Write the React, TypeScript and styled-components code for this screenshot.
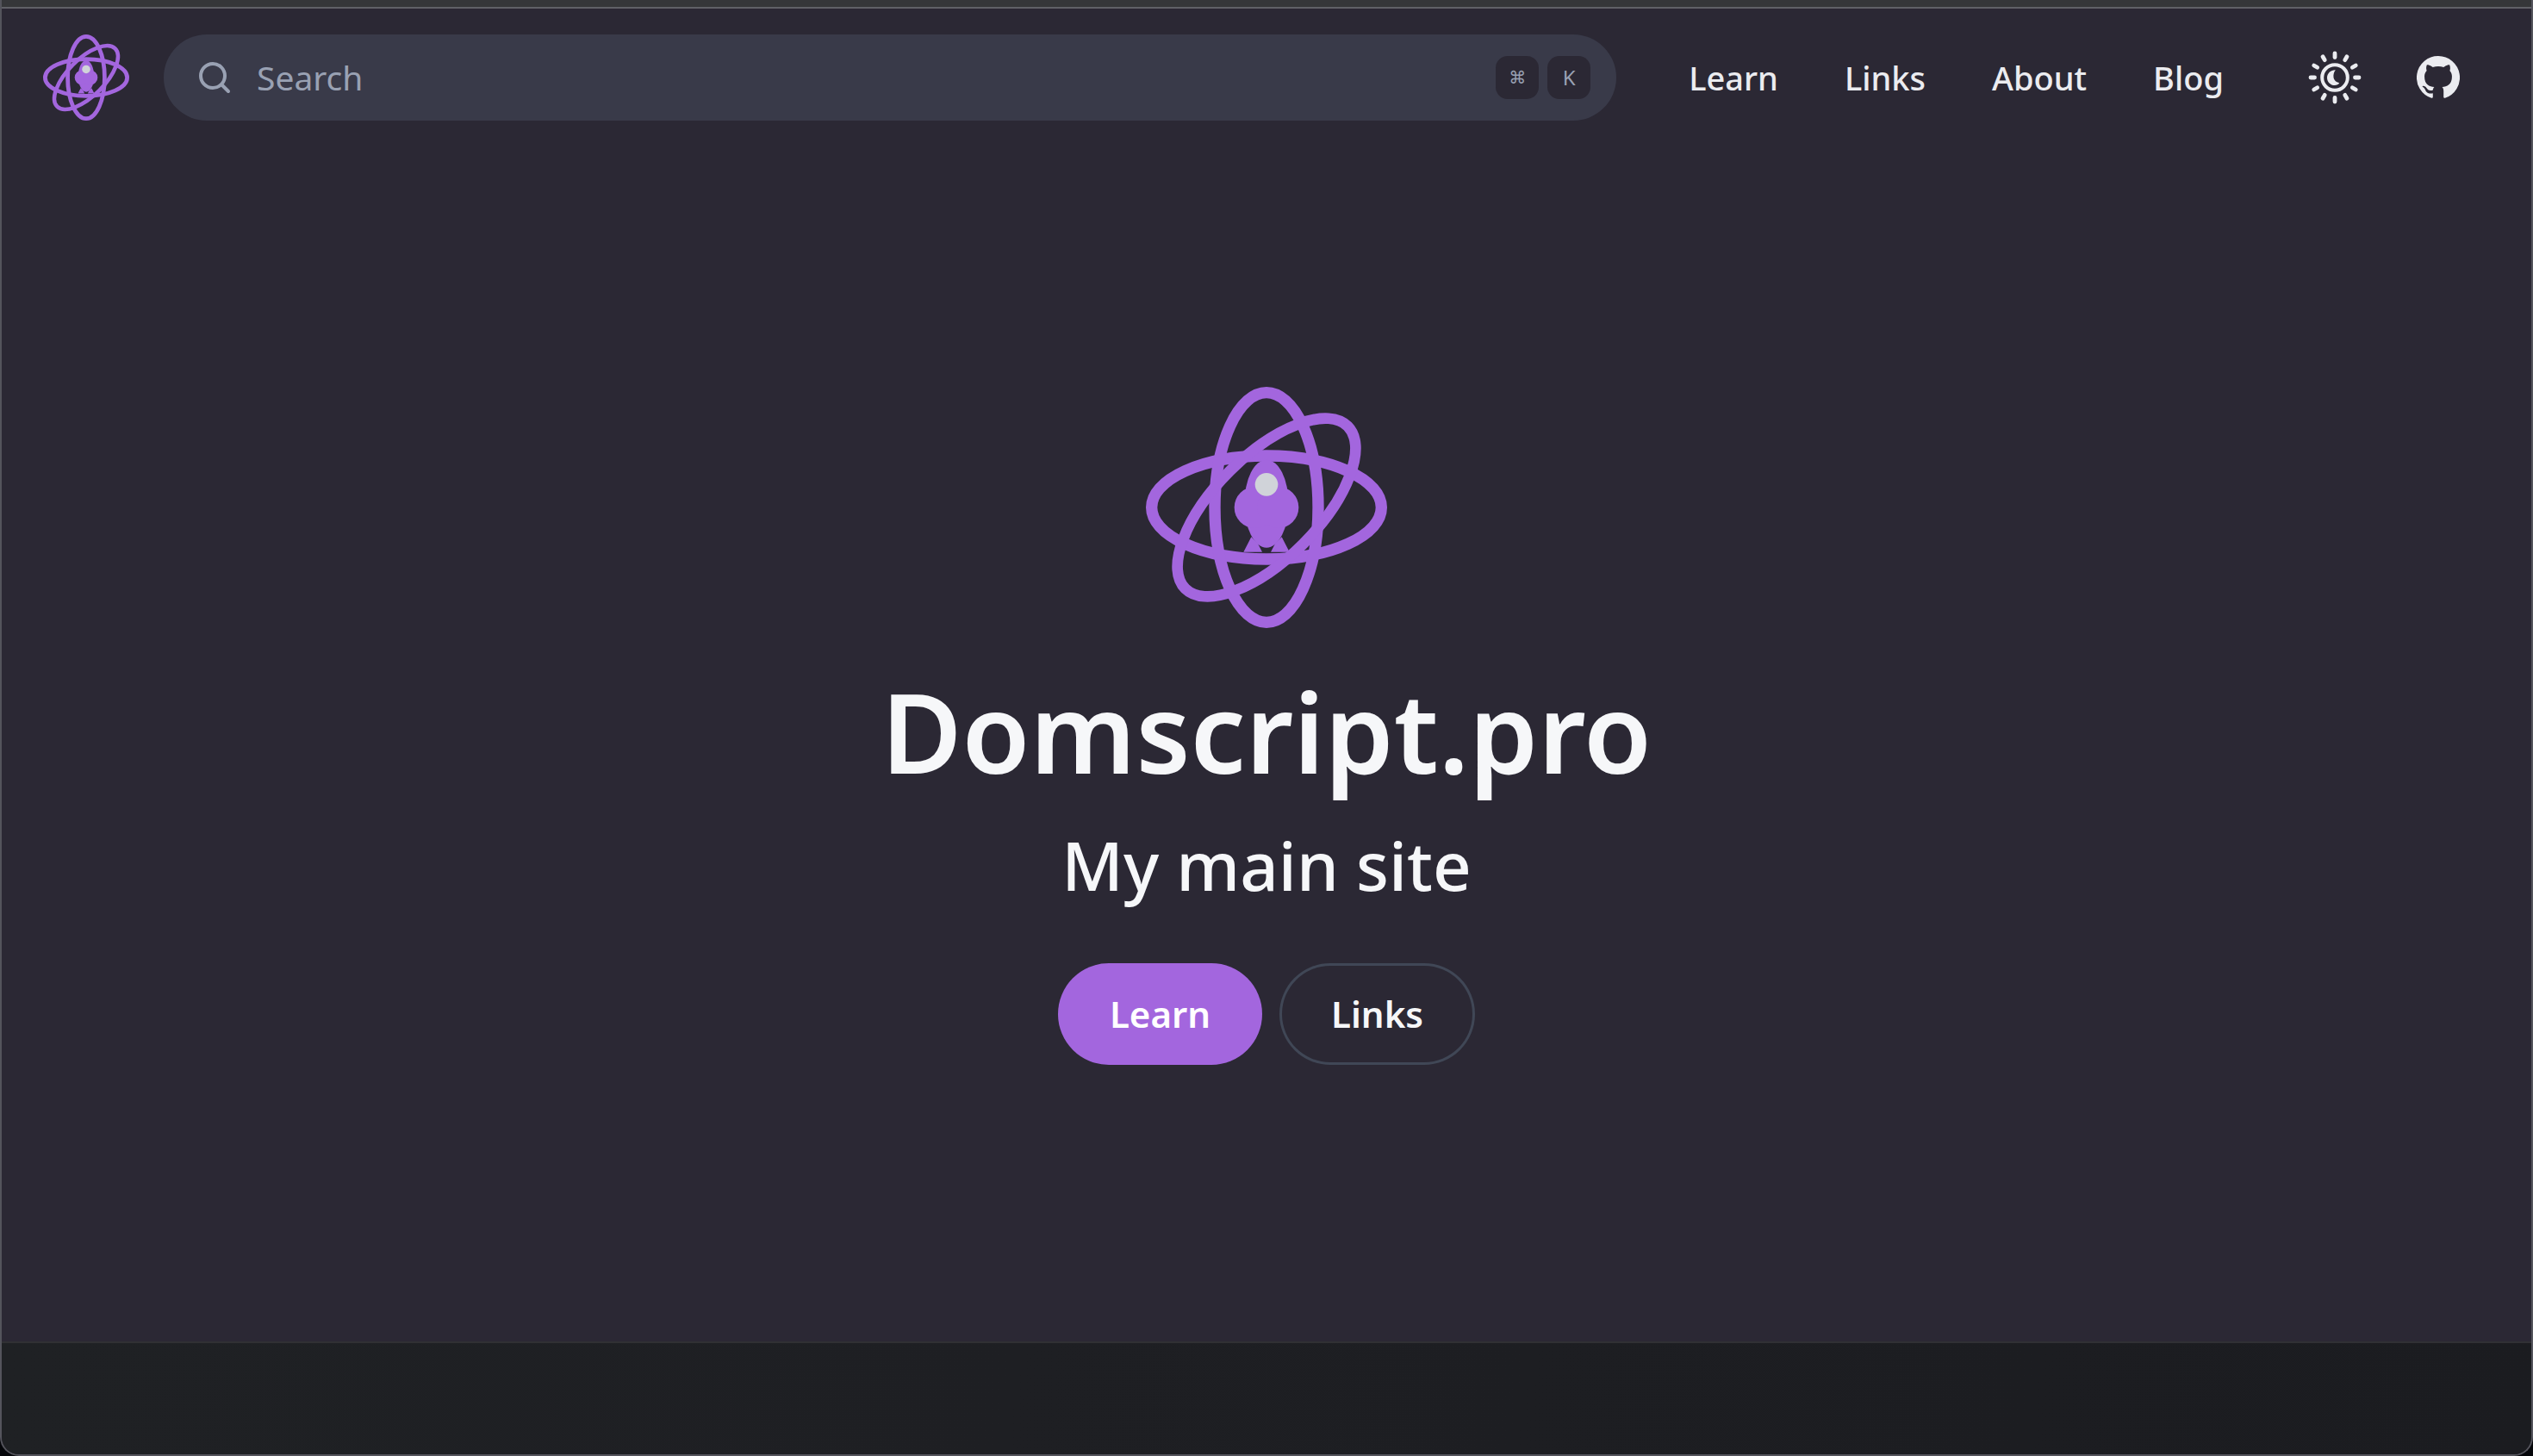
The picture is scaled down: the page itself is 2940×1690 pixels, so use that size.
import React from "react";
import styled, { createGlobalStyle } from "styled-components";

const color = {
  page: "#2b2834",
  accent: "#a366de",
  field: "#393a49",
  muted: "#99a1b3",
  text: "#ebecf0",
  heading: "#f6f7f9",
  outline: "#404756",
};

const GlobalStyle = createGlobalStyle`
  *, *::before, *::after { box-sizing: border-box; }
  body {
    margin: 0;
    background: #05060a;
    color: ${color.text};
    font-family: "Noto Sans", "DejaVu Sans", sans-serif;
  }
`;

const Window = styled.div`
  display: flex;
  flex-direction: column;
  min-height: 100vh;
  overflow: hidden;
  border-radius: 0 0 22px 22px;
  border: 2px solid #54545c;
  border-top: 0;
  background: ${color.page};
`;

const TopStrip = styled.div`
  flex: none;
  height: 10px;
  margin: 0 -2px;
  background: #353639;
  border-bottom: 2px solid #606067;
`;

const Header = styled.header`
  display: flex;
  align-items: center;
  padding: 30px 83px 30px 48px;
`;

const HomeLink = styled.a`
  display: flex;
  margin-right: 40px;
`;

const SearchBox = styled.label`
  flex: 1;
  min-width: 0;
  height: 100px;
  display: flex;
  align-items: center;
  gap: 10px;
  padding: 0 30px 0 40px;
  border-radius: 50px;
  background: ${color.field};
  color: ${color.muted};
`;

const SearchInput = styled.input`
  flex: 1;
  min-width: 0;
  margin-left: 20px;
  padding: 0;
  border: 0;
  outline: 0;
  background: transparent;
  color: ${color.text};
  font: 400 39px/50px "Noto Sans", sans-serif;
  &::placeholder { color: ${color.muted}; opacity: 1; }
`;

const Key = styled.kbd<{ $symbol?: boolean }>`
  display: flex;
  align-items: center;
  justify-content: center;
  width: 50px;
  height: 50px;
  border-radius: 14px;
  background: ${color.page};
  font: 400 ${(p) => (p.$symbol ? 20 : 24)}px/30px "Noto Sans", "DejaVu Sans", sans-serif;
`;

const Nav = styled.nav`
  display: flex;
  gap: 77px;
  margin: 0 98px 0 84px;
`;

const NavLink = styled.a`
  color: ${color.text};
  text-decoration: none;
  font-size: 38px;
  line-height: 50px;
  font-weight: 500;
`;

const Actions = styled.div`
  display: flex;
  align-items: center;
  gap: 64px;
`;

const IconButton = styled.button`
  display: flex;
  padding: 0;
  border: 0;
  background: none;
  color: ${color.text};
`;

const IconLink = styled.a`
  display: flex;
  color: ${color.text};
`;

const Hero = styled.main`
  flex: 1;
  display: flex;
  flex-direction: column;
  align-items: center;
  justify-content: center;
  padding-bottom: 42px;
`;

const Title = styled.h1`
  margin: 40px 0 0;
  color: ${color.heading};
  font-size: 128px;
  line-height: 160px;
  font-weight: 600;
`;

const Subtitle = styled.p`
  margin: 15px 0 54px;
  color: ${color.heading};
  font-size: 78px;
  line-height: 120px;
  font-weight: 500;
`;

const Buttons = styled.div`
  display: flex;
  gap: 20px;
`;

const ButtonLink = styled.a<{ $primary?: boolean }>`
  display: flex;
  align-items: center;
  height: 118px;
  padding: 0 60px;
  border-radius: 59px;
  background: ${(p) => (p.$primary ? color.accent : "transparent")};
  box-shadow: ${(p) => (p.$primary ? "none" : `inset 0 0 0 3px ${color.outline}`)};
  color: ${(p) => (p.$primary ? "#ffffff" : color.heading)};
  text-decoration: none;
  font-size: 42px;
  line-height: 50px;
  font-weight: 600;
`;

const Footer = styled.footer`
  flex: none;
  height: 131px;
  border-top: 2px solid #303034;
  background: linear-gradient(100deg, #1f2124, #1e1f23 40%, #1b1c20);
`;

function Logo({ size }: { size: number }) {
  return (
    <svg width={size} height={size} viewBox="90 90 840 840" aria-hidden="true">
      <g fill="none" stroke={color.accent}>
        <ellipse cx="510" cy="510" rx="400" ry="180" strokeWidth="40" />
        <ellipse cx="510" cy="510" rx="180" ry="400" strokeWidth="40" />
        <ellipse cx="510" cy="510" rx="400" ry="180" strokeWidth="38" transform="rotate(-45 510 510)" />
      </g>
      <g fill={color.accent}>
        <ellipse cx="510" cy="497" rx="77" ry="153" />
        <circle cx="470" cy="510" r="72" />
        <circle cx="550" cy="510" r="72" />
        <path d="M457 613L430 665H495L480 636ZM563 613L590 665H525L540 636Z" />
      </g>
      <circle cx="510" cy="430" r="40" fill="#d0d3d9" />
    </svg>
  );
}

function SearchIcon() {
  return (
    <svg width="38" height="38" viewBox="0 0 38 38" fill="none" stroke="currentColor" strokeWidth="4" strokeLinecap="round" aria-hidden="true">
      <circle cx="17" cy="17" r="14" />
      <path d="M27.500 27.500L35 35" />
    </svg>
  );
}

function ThemeIcon() {
  const rays = Array.from({ length: 12 }, (_, i) => i * 30);
  return (
    <svg width="62" height="62" viewBox="-31 -31 62 62" aria-hidden="true">
      <g fill="none" stroke="currentColor" strokeLinecap="round">
        <circle r="14.800" strokeWidth="4" />
        {rays.map((a) => (
          <path key={a} d="M0 -23.500V-28" strokeWidth="4.800" transform={`rotate(${a})`} />
        ))}
      </g>
      <path fill="currentColor" d="M.8 -8.800C-4.500 -9 -9 -5 -9 0.200C-9 5.200 -5 9 -.2 9C2 9 4.400 8 5.200 6.200C1.500 5.600 -1 3 -1.500 -.2C-1.900 -3.500 -1 -6.500 .8 -8.800Z" />
    </svg>
  );
}

function GithubIcon() {
  return (
    <svg width="50" height="50" viewBox="0 0 20 20" fill="currentColor" aria-hidden="true">
      <path d="M10 0a10 10 0 0 0-3.160 19.490c.5.1.68-.22.68-.48l-.01-1.700c-2.780.6-3.370-1.340-3.370-1.340-.46-1.160-1.110-1.470-1.110-1.470-.9-.62.07-.6.07-.6 1 .07 1.530 1.030 1.530 1.030.9 1.520 2.340 1.080 2.910.83.1-.65.35-1.090.63-1.340-2.220-.25-4.550-1.110-4.550-4.940 0-1.100.39-1.990 1.030-2.690a3.600 3.600 0 0 1 .1-2.640s.84-.27 2.750 1.020a9.580 9.580 0 0 1 5 0c1.910-1.300 2.750-1.020 2.750-1.020.55 1.370.2 2.400.1 2.640.64.7 1.030 1.600 1.030 2.690 0 3.840-2.340 4.680-4.570 4.930.36.31.68.92.68 1.850l-.01 2.750c0 .26.18.58.69.48A10 10 0 0 0 10 0" />
    </svg>
  );
}

const links = ["Learn", "Links", "About", "Blog"];

export default function App() {
  return (
    <>
      <GlobalStyle />
      <Window>
        <TopStrip />
        <Header>
          <HomeLink href="#home" aria-label="Home">
            <Logo size={100} />
          </HomeLink>
          <SearchBox>
            <SearchIcon />
            <SearchInput type="text" placeholder="Search" aria-label="Search" />
            <Key $symbol>⌘</Key>
            <Key>K</Key>
          </SearchBox>
          <Nav>
            {links.map((name) => (
              <NavLink key={name} href={`#${name.toLowerCase()}`}>
                {name}
              </NavLink>
            ))}
          </Nav>
          <Actions>
            <IconButton type="button" aria-label="Switch theme">
              <ThemeIcon />
            </IconButton>
            <IconLink href="#github" aria-label="GitHub">
              <GithubIcon />
            </IconLink>
          </Actions>
        </Header>
        <Hero>
          <Logo size={280} />
          <Title>Domscript.pro</Title>
          <Subtitle>My main site</Subtitle>
          <Buttons>
            <ButtonLink $primary href="#learn">
              Learn
            </ButtonLink>
            <ButtonLink href="#links">Links</ButtonLink>
          </Buttons>
        </Hero>
        <Footer />
      </Window>
    </>
  );
}
